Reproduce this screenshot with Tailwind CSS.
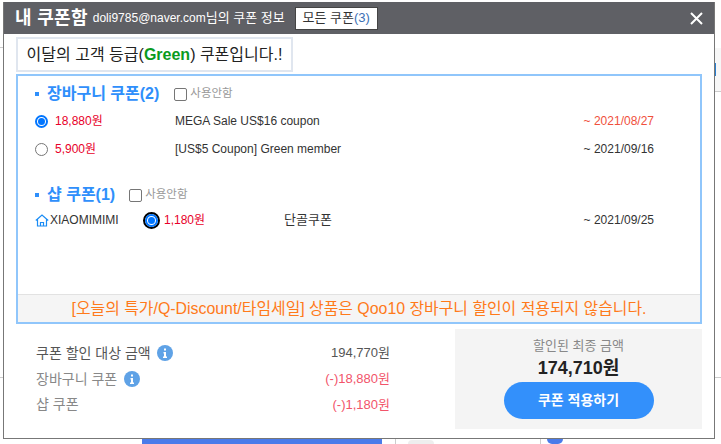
<!DOCTYPE html>
<html lang="ko">
<head>
  <meta charset="UTF-8" />
  <title>내 쿠폰함</title>
  <script src="https://cdn.jsdelivr.net/npm/@tailwindcss/browser@4"></script>
</head>
<body class="bg-white overflow-hidden h-[444px] w-[721px] relative font-['Liberation_Sans','Noto_Sans_CJK_KR',sans-serif] text-[12px] text-[#333]">

  <!-- page behind the popup -->
  <div class="absolute left-[142px] top-[439px] w-[240px] h-[5px] bg-[#4a7bea]"></div>
  <div class="absolute left-[395px] top-[439px] w-px h-[5px] bg-[#ccc]"></div>
  <div class="absolute left-[540px] top-[439px] w-px h-[5px] bg-[#ccc]"></div>
  <div class="absolute left-[408px] top-[440px] w-[26px] h-[4px] rounded-t-full bg-[#eee]"></div>
  <div class="absolute left-[547px] top-[439px] w-[16px] h-[5px] rounded-b-full bg-[#4a7bea]"></div>
  <div class="absolute left-0 top-[47px] w-[3px] h-px bg-[#ccc]"></div>
  <div class="absolute left-0 top-[377px] w-[3px] h-px bg-[#ccc]"></div>
  <div class="absolute left-[715px] top-[48px] w-[6px] h-[44px] bg-[#f7f7f7] border-b border-[#ccc]"></div>
  <div class="absolute left-[715px] top-[63px] w-px h-[13px] bg-[#2a7fd0]"></div>
  <div class="absolute left-[715px] top-[377px] w-[6px] h-px bg-[#ccc]"></div>

  <!-- popup -->
  <div class="absolute left-[3px] top-[2px] w-[712px] h-[437px] bg-white border-x border-b border-[#777] flex flex-col">

    <header class="h-[32px] bg-[#5f6065] flex items-center pl-[11px] pr-[11px] text-white">
      <h1 class="text-[18px] font-bold tracking-[0.3px]">내 쿠폰함</h1>
      <span class="ml-[5px] text-[12px] font-medium">doli9785@naver.com</span>
      <span class="text-[13px]">님의 쿠폰 정보</span>
      <button class="ml-[10px] w-[83px] h-[23px] bg-white border border-[#444] text-[13px] text-[#333]">모든 쿠폰<span class="text-[#3b6fb5]">(3)</span></button>
      <svg class="ml-auto" width="13" height="13" viewBox="0 0 13 13" fill="none" stroke="white" stroke-width="2"><path d="M1 1 12 12M12 1 1 12" /></svg>
    </header>

    <div class="ml-[12px] mt-[3px] w-[277px] h-[35px] border-2 border-[#e0e6ef] flex items-center justify-center text-[16px] text-[#222]">
      <span>이달의 고객 등급(<b class="text-[#0a9b1e]">Green</b>) 쿠폰입니다.!</span>
    </div>

    <section class="ml-[12px] mt-[2px] w-[686px] h-[250px] border-2 border-[#90c6fb] flex flex-col">
      <div class="flex-1 pl-[17px] relative">
        <div class="flex items-center h-[20px] mt-[8px]">
          <span class="w-[4px] h-[4px] bg-[#2f8ffb] mr-[8px]"></span>
          <h2 class="text-[16px] font-bold text-[#2f8ffb]">장바구니 쿠폰(2)</h2>
          <span class="ml-[15px] w-[13px] h-[13px] rounded-[2px] border border-[#767676] bg-white"></span>
          <span class="ml-[3px] text-[11.5px] text-[#999]">사용안함</span>
        </div>
        <div class="flex items-center h-[20px] mt-[7px]">
          <span class="w-[13px] h-[13px] rounded-full border-2 border-[#0075ff] flex items-center justify-center"><span class="w-[7px] h-[7px] rounded-full bg-[#0075ff]"></span></span>
          <span class="ml-[7px] w-[120px] text-[#e8002a]">18,880원</span>
          <span>MEGA Sale US$16 coupon</span>
          <span class="ml-auto mr-[46px] text-[#f0503c]">~ 2021/08/27</span>
        </div>
        <div class="flex items-center h-[20px] mt-[8px]">
          <span class="w-[13px] h-[13px] rounded-full border border-[#767676]"></span>
          <span class="ml-[7px] w-[120px] text-[#e8002a]">5,900원</span>
          <span>[US$5 Coupon] Green member</span>
          <span class="ml-auto mr-[46px]">~ 2021/09/16</span>
        </div>
        <div class="flex items-center h-[20px] mt-[26px]">
          <span class="w-[4px] h-[4px] bg-[#2f8ffb] mr-[8px]"></span>
          <h2 class="text-[16px] font-bold text-[#2f8ffb]">샵 쿠폰(1)</h2>
          <span class="ml-[14px] w-[13px] h-[13px] rounded-[2px] border border-[#767676] bg-white"></span>
          <span class="ml-[3px] text-[11.5px] text-[#999]">사용안함</span>
        </div>
        <div class="flex items-center h-[20px] mt-[5px]">
          <svg width="14" height="13" viewBox="0 0 14 13" fill="none" stroke="#1a8cf5" stroke-width="1.2"><path d="M0.8 6.5 7 1l6.2 5.5M2.5 5.5V12h9V5.5M5.5 12V8.5h3V12" /></svg>
          <span class="ml-px w-[93px]">XIAOMIMIMI</span>
          <span class="w-[17px] h-[17px] rounded-full border-2 border-black flex items-center justify-center"><span class="w-[13px] h-[13px] rounded-full border-2 border-[#0075ff] flex items-center justify-center"><span class="w-[7px] h-[7px] rounded-full bg-[#0075ff]"></span></span></span>
          <span class="ml-[4px] w-[120px] text-[#e8002a]">1,180원</span>
          <span class="text-[13px]">단골쿠폰</span>
          <span class="ml-auto mr-[46px]">~ 2021/09/25</span>
        </div>
      </div>
      <div class="h-[28px] bg-[#f5f5f5] border-t border-[#e2e2e2] flex items-center justify-center text-[15.9px] text-[#ff7a1a]">[오늘의 특가/Q-Discount/타임세일] 상품은 Qoo10 장바구니 할인이 적용되지 않습니다.</div>
    </section>

    <div class="flex mt-[5px] ml-[12px] w-[686px]">
      <dl class="w-[374px] pl-[20px] pt-[11px] text-[13px]">
        <div class="flex items-center justify-between h-[26px] text-[#555]">
          <dt class="flex items-center text-[14px]">쿠폰 할인 대상 금액
            <svg class="ml-[6px]" width="16" height="16" viewBox="0 0 16 16"><circle cx="8" cy="8" r="8" fill="#5fa2e6" /><path d="M7 3.5h2v2H7zM6.5 7H9v4.5h1V13H6v-1.5h1V8.5h-.5z" fill="white" /></svg>
          </dt>
          <dd>194,770원</dd>
        </div>
        <div class="flex items-center justify-between h-[26px] text-[#888]">
          <dt class="flex items-center text-[14px]">장바구니 쿠폰
            <svg class="ml-[7px]" width="16" height="16" viewBox="0 0 16 16"><circle cx="8" cy="8" r="8" fill="#5fa2e6" /><path d="M7 3.5h2v2H7zM6.5 7H9v4.5h1V13H6v-1.5h1V8.5h-.5z" fill="white" /></svg>
          </dt>
          <dd class="text-[#f2546a]">(-)18,880원</dd>
        </div>
        <div class="flex items-center justify-between h-[25px] text-[#888]">
          <dt class="text-[14px]">샵 쿠폰</dt>
          <dd class="text-[#f2546a]">(-)1,180원</dd>
        </div>
      </dl>
      <div class="ml-[65px] w-[247px] h-[100px] bg-[#f4f4f4] flex flex-col items-center pt-[9px]">
        <p class="text-[13px] text-[#888] leading-[16px]">할인된 최종 금액</p>
        <p class="text-[18px] font-bold text-[#222] leading-[24px] mt-[2px]">174,710원</p>
        <button class="mt-[2px] w-[150px] h-[37px] rounded-full bg-[#3390fb] text-white text-[14px] font-bold">쿠폰 적용하기</button>
      </div>
    </div>
  </div>
</body>
</html>
